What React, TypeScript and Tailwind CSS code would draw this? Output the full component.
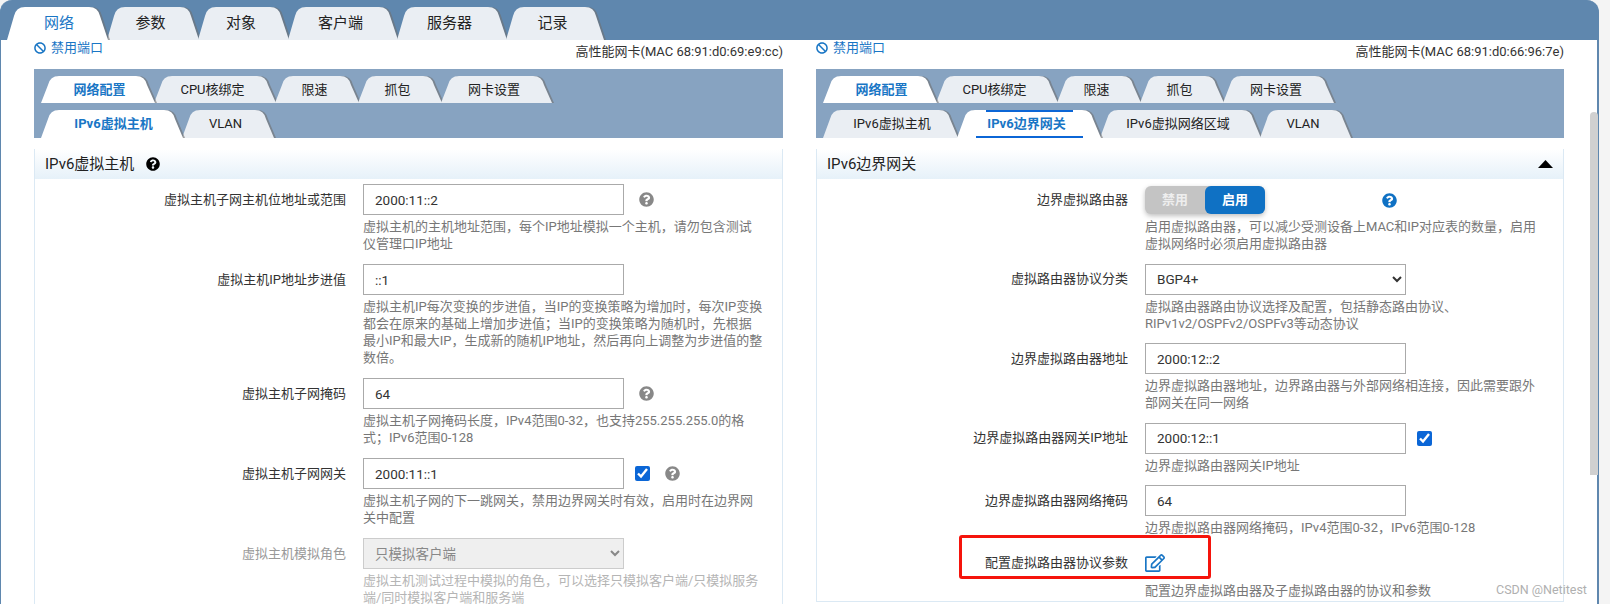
import React from 'react';
import { FaBan, FaQuestionCircle, FaRegEdit } from 'react-icons/fa';

interface TabItem {
  label: string;
  width: number;
  active?: boolean;
  marked?: boolean;
}

const mainTabs: TabItem[] = [
  { label: '网络', width: 100, active: true },
  { label: '参数', width: 91 },
  { label: '对象', width: 90 },
  { label: '客户端', width: 109 },
  { label: '服务器', width: 109 },
  { label: '记录', width: 97 },
];

const configTabs: TabItem[] = [
  { label: '网络配置', width: 113, active: true },
  { label: 'CPU核绑定', width: 121 },
  { label: '限速', width: 83 },
  { label: '抓包', width: 83 },
  { label: '网卡设置', width: 110 },
];

const Tab = ({ item, height, big, first }: { item: TabItem; height: number; big?: boolean; first: boolean }) => {
  const w = item.width + 3;
  const h = height;
  const shape = `M0,${h} L7,9 Q9,0 18,0 L${w - 21},0 Q${w - 12},0 ${w - 10},9 L${w - 2},${h} Z`;

  return (
    <div
      className={`relative shrink-0 flex items-center justify-center ${first ? 'pl-[4px]' : 'pr-[4px]'} ${
        item.active ? 'z-10' : ''
      }`}
      style={{ width: item.width, height }}
    >
      <svg className="absolute left-0 top-0 overflow-visible" width={w} height={h}>
        <path d={shape} fill="#6f6f6f" opacity="0.6" transform="translate(2,0)" />
        <path d={shape} fill={item.active ? '#ffffff' : '#eaeef3'} />
      </svg>
      {item.marked && (
        <>
          <div className="absolute left-[29px] right-[27px] top-0 h-[2px] bg-[#0b66d6]" />
          <div className="absolute left-[19px] right-[17px] bottom-0 h-[2px] bg-[#0b66d6]" />
        </>
      )}
      <span
        className={`relative whitespace-nowrap ${big ? 'text-[15px]' : 'text-[13px]'} ${
          item.active ? 'text-[#1976c5]' : 'text-[#222]'
        } ${item.active && !big ? 'font-bold' : ''}`}
      >
        {item.label}
      </span>
    </div>
  );
};

const TabRow = ({ items, height, big }: { items: TabItem[]; height: number; big?: boolean }) => (
  <div className="flex">
    {items.map((item, i) => (
      <Tab key={item.label} item={item} height={height} big={big} first={i === 0} />
    ))}
  </div>
);

const Row = ({
  label,
  help,
  disabled,
  children,
}: {
  label: string;
  help: string[];
  disabled?: boolean;
  children: React.ReactNode;
}) => (
  <div className="flex">
    <div
      className={`w-[311px] h-[31px] shrink-0 flex items-center justify-end text-[13px] ${
        disabled ? 'text-[#999]' : 'text-[#333]'
      }`}
    >
      {label}
    </div>
    <div className="pl-[17px]">
      <div className="flex items-center min-h-[31px]">{children}</div>
      <div className={`mt-[3px] text-[13px] leading-[17px] ${disabled ? 'text-[#b5b5b5]' : 'text-[#777]'}`}>
        {help.map((line) => (
          <div key={line} className="whitespace-nowrap">
            {line}
          </div>
        ))}
      </div>
    </div>
  </div>
);

const TextInput = ({ value }: { value: string }) => (
  <input
    readOnly
    value={value}
    className="w-[261px] h-[31px] border border-[#aaa] bg-white pl-[11px] text-[13.5px] text-[#333] outline-none"
  />
);

const SelectBox = ({ value, disabled }: { value: string; disabled?: boolean }) => (
  <select
    disabled={disabled}
    defaultValue={value}
    className={`w-[261px] h-[31px] border pl-[7px] text-[13.5px] ${
      disabled ? 'border-[#ccc] bg-[#efefef] text-[#888]' : 'border-[#aaa] bg-white text-[#333]'
    }`}
  >
    <option>{value}</option>
  </select>
);

const Check = () => (
  <input type="checkbox" readOnly checked className="ml-[11px] w-[15px] h-[15px] accent-[#0b66d6]" />
);

const Hint = () => <FaQuestionCircle className="ml-[15px] text-[15px] text-[#888]" />;

const NicPanel = ({
  mac,
  width,
  tabs,
  title,
  header,
  body,
  children,
}: {
  mac: string;
  width: string;
  tabs: TabItem[];
  title: React.ReactNode;
  header: React.ReactNode;
  body: string;
  children: React.ReactNode;
}) => (
  <div className={`${width} shrink-0`}>
    <div className="h-[29px] flex justify-between">
      <div className="flex items-center h-[16px] text-[13px] text-[#1976c5]">
        <FaBan className="mr-[5px] text-[12px]" />
        禁用端口
      </div>
      <div className="mt-[2px] text-[13px] text-[#333]">{mac}</div>
    </div>
    <div className="h-[69px] bg-[#87a3c1] pl-[7px] pt-[7px] flex flex-col gap-[7px]">
      <TabRow items={configTabs} height={27} />
      <TabRow items={tabs} height={28} />
    </div>
    <div className="mt-[11px] h-[30px] px-[10px] flex items-center justify-between bg-gradient-to-b from-white to-[#e6f1f9] border-x border-[#dbe9f4]">
      <div className="flex items-center text-[15px] text-[#222]">{title}</div>
      {header}
    </div>
    <div className={`border-x border-[#dbe9f4] pt-[5px] flex flex-col ${body}`}>{children}</div>
  </div>
);

export default function App() {
  return (
    <div className="relative w-[1610px] h-[604px] overflow-hidden bg-[#f4f4f4] font-['Roboto','Noto_Sans_CJK_SC',sans-serif]">
      <div className="w-[1599px] h-full rounded-t-xl bg-[#5f87ae] border-r-2 border-l border-[#5f87ae] flex flex-col">
        <div className="h-[40px] shrink-0 pt-[7px] pl-[6px]">
          <TabRow items={mainTabs} height={33} big />
        </div>
        <div className="flex-1 min-h-0 overflow-hidden bg-white pl-[33px] flex gap-[33px]">
          <NicPanel
            mac="高性能网卡(MAC 68:91:d0:69:e9:cc)"
            width="w-[749px]"
            tabs={[
              { label: 'IPv6虚拟主机', width: 141, active: true },
              { label: 'VLAN', width: 91 },
            ]}
            title={
              <>
                IPv6虚拟主机
                <FaQuestionCircle className="ml-[12px] text-[14px] text-black" />
              </>
            }
            header={null}
            body="gap-[12px]"
          >
            <Row
              label="虚拟主机子网主机位地址或范围"
              help={['虚拟主机的主机地址范围，每个IP地址模拟一个主机，请勿包含测试', '仪管理口IP地址']}
            >
              <TextInput value="2000:11::2" />
              <Hint />
            </Row>
            <Row
              label="虚拟主机IP地址步进值"
              help={[
                '虚拟主机IP每次变换的步进值，当IP的变换策略为增加时，每次IP变换',
                '都会在原来的基础上增加步进值；当IP的变换策略为随机时，先根据',
                '最小IP和最大IP，生成新的随机IP地址，然后再向上调整为步进值的整',
                '数倍。',
              ]}
            >
              <TextInput value="::1" />
            </Row>
            <Row
              label="虚拟主机子网掩码"
              help={['虚拟主机子网掩码长度，IPv4范围0-32，也支持255.255.255.0的格', '式；IPv6范围0-128']}
            >
              <TextInput value="64" />
              <Hint />
            </Row>
            <Row
              label="虚拟主机子网网关"
              help={['虚拟主机子网的下一跳网关，禁用边界网关时有效，启用时在边界网', '关中配置']}
            >
              <TextInput value="2000:11::1" />
              <Check />
              <Hint />
            </Row>
            <Row
              label="虚拟主机模拟角色"
              disabled
              help={['虚拟主机测试过程中模拟的角色，可以选择只模拟客户端/只模拟服务', '端/同时模拟客户端和服务端']}
            >
              <SelectBox value="只模拟客户端" disabled />
            </Row>
          </NicPanel>

          <NicPanel
            mac="高性能网卡(MAC 68:91:d0:66:96:7e)"
            width="w-[748px]"
            tabs={[
              { label: 'IPv6虚拟主机', width: 134 },
              { label: 'IPv6边界网关', width: 143, active: true, marked: true },
              { label: 'IPv6虚拟网络区域', width: 160 },
              { label: 'VLAN', width: 90 },
            ]}
            title="IPv6边界网关"
            header={
              <svg width="15" height="8" viewBox="0 0 15 8">
                <path d="M7.5 0 L15 8 L0 8 Z" fill="#000" />
              </svg>
            }
            body="gap-[11.5px] h-[423px] border-b"
          >
            <Row
              label="边界虚拟路由器"
              help={['启用虚拟路由器，可以减少受测设备上MAC和IP对应表的数量，启用', '虚拟网络时必须启用虚拟路由器']}
            >
              <div className="flex w-[120px] h-[28px] rounded-md bg-[#c4c4c4] shadow-[0_2px_5px_rgba(0,0,0,0.25)] text-[13px] font-bold">
                <div className="w-[60px] flex items-center justify-center text-[#eee]">禁用</div>
                <div className="w-[60px] flex items-center justify-center rounded-md bg-[#0f71c4] text-white">
                  启用
                </div>
              </div>
              <FaQuestionCircle className="ml-[117px] mt-[2px] text-[15px] text-[#0f71c4]" />
            </Row>
            <Row
              label="虚拟路由器协议分类"
              help={['虚拟路由器路由协议选择及配置，包括静态路由协议、', 'RIPv1v2/OSPFv2/OSPFv3等动态协议']}
            >
              <SelectBox value="BGP4+" />
            </Row>
            <Row
              label="边界虚拟路由器地址"
              help={['边界虚拟路由器地址，边界路由器与外部网络相连接，因此需要跟外', '部网关在同一网络']}
            >
              <TextInput value="2000:12::2" />
            </Row>
            <Row label="边界虚拟路由器网关IP地址" help={['边界虚拟路由器网关IP地址']}>
              <TextInput value="2000:12::1" />
              <Check />
            </Row>
            <Row label="边界虚拟路由器网络掩码" help={['边界虚拟路由器网络掩码，IPv4范围0-32，IPv6范围0-128']}>
              <TextInput value="64" />
            </Row>
            <Row label="配置虚拟路由器协议参数" help={['配置边界虚拟路由器及子虚拟路由器的协议和参数']}>
              <FaRegEdit className="text-[20px] text-[#1976c5]" />
            </Row>
          </NicPanel>
        </div>
      </div>

      {/* scrollbar, annotation and watermark sit on top of the page */}
      <div className="absolute left-[1590px] top-[112px] w-[8px] h-[363px] rounded-t bg-[#d0d0d0]" />
      <div className="absolute left-[959px] top-[535px] w-[252px] h-[44px] rounded-[3px] border-[3px] border-[#f5140c]" />
      <div className="absolute left-[1496px] top-[581px] text-[12.5px] text-[#b0b0b0]">CSDN @Netitest</div>
    </div>
  );
}
